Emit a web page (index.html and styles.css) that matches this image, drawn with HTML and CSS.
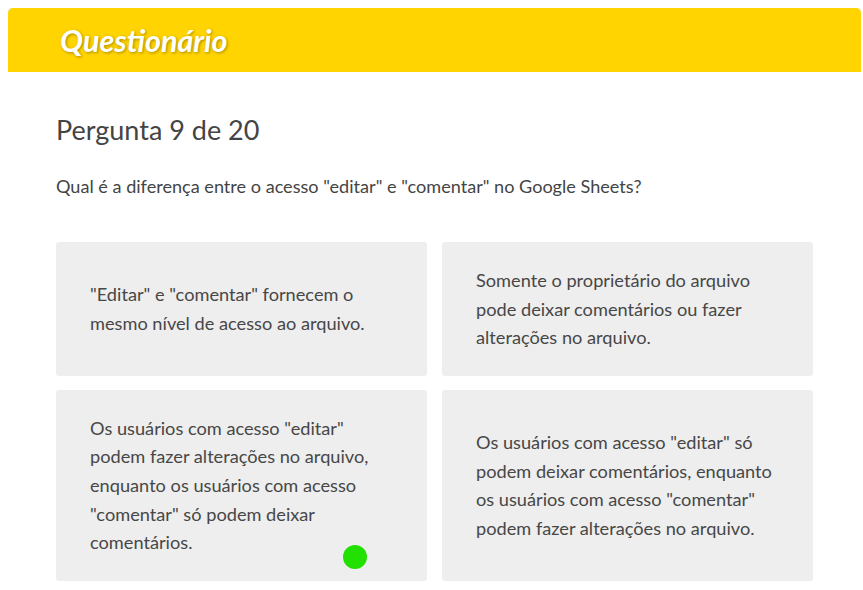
FILE: index.html
```html
<!DOCTYPE html>
<html lang="pt">
<head>
<meta charset="utf-8">
<title>Questionário</title>
<link rel="stylesheet" href="styles.css">
</head>
<body>
<div class="quiz">
  <header class="quiz-header">
    <h1 class="quiz-title">Questionário</h1>
  </header>
  <main class="quiz-body">
    <h2 class="question-count">Pergunta 9 de 20</h2>
    <p class="question-text">Qual é a diferença entre o acesso "editar" e "comentar" no Google Sheets?</p>
    <div class="options">
      <div class="option">"Editar" e "comentar" fornecem o mesmo nível de acesso ao arquivo.</div>
      <div class="option">Somente o proprietário do arquivo pode deixar comentários ou fazer alterações no arquivo.</div>
      <div class="option option-cursor">Os usuários com acesso "editar" podem fazer alterações no arquivo, enquanto os usuários com acesso "comentar" só podem deixar comentários.<span class="cursor-dot"></span></div>
      <div class="option">Os usuários com acesso "editar" só podem deixar comentários, enquanto os usuários com acesso "comentar" podem fazer alterações no arquivo.</div>
    </div>
  </main>
</div>
</body>
</html>
```
FILE: styles.css
```css
html, body {
  background: #ffffff;
}
body {
  margin: 8px 2px 0 8px;
  font-family: "Lato", "Liberation Sans", sans-serif;
  color: #474747;
}
.quiz {
  background: #ffffff;
  border-radius: 5px;
  box-shadow: 0 0 5px rgba(0, 0, 0, 0.12);
  overflow: hidden;
}
.quiz-header {
  background: #ffd400;
  height: 64px;
  display: flex;
  align-items: center;
  padding-left: 52px;
}
.quiz-title {
  margin: 0;
  color: #ffffff;
  font-size: 30.5px;
  font-weight: 700;
  font-style: italic;
  text-shadow: 1px 1px 3px rgba(0, 0, 0, 0.35);
}
.quiz-body {
  padding: 37px 48px 40px 48px;
}
.question-count {
  margin: 0;
  font-size: 27px;
  font-weight: 400;
  color: #444444;
  line-height: 42px;
}
.question-text {
  margin: 22px 0 0 0;
  font-size: 18.1px;
  line-height: 26px;
  color: #444444;
}
.options {
  margin-top: 43px;
  display: grid;
  grid-template-columns: 1fr 1fr;
  column-gap: 15px;
  row-gap: 14px;
}
.option {
  background: #eeeeee;
  border-radius: 3px;
  padding: 24px 34px;
  font-size: 18.2px;
  line-height: 28.6px;
  display: flex;
  align-items: center;
  color: #474747;
}
.option-cursor {
  position: relative;
}
.cursor-dot {
  position: absolute;
  left: 287px;
  top: 155px;
  width: 24px;
  height: 24px;
  border-radius: 50%;
  background: #22e000;
}
```
